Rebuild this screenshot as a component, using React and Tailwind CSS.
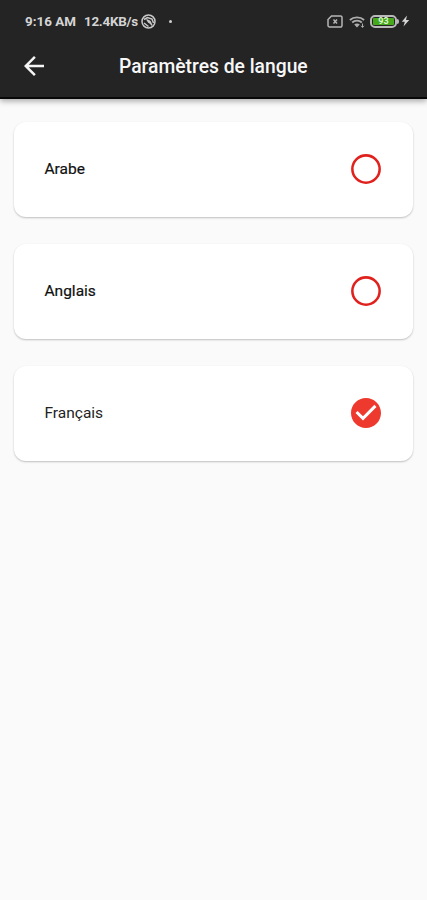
import { useState } from "react";

const LANGUAGES = [
  { code: "ar", label: "Arabe" },
  { code: "en", label: "Anglais" },
  { code: "fr", label: "Français" },
];

function StatusBar() {
  return (
    <div className="flex h-[42px] items-center pl-[25px] pr-[17px] text-[13.4px] font-bold leading-none text-[#d4d4d4]">
      <span className="w-[59px] whitespace-nowrap pt-[2px]">9:16 AM</span>
      <span className="w-[57px] whitespace-nowrap pt-[2px] tracking-[-0.25px]">12.4KB/s</span>
      <svg className="size-[15px]" viewBox="0 0 15 15" fill="none" stroke="#c9c9c9">
        <circle cx="7.5" cy="7.5" r="6.5" strokeWidth="1.5" />
        <path d="M3 5.5 6.5 3.5l4.5 1.5 1.5 4M6 6l3 1.5 2 4M3 9l4.5 3.5" strokeWidth="1.5" />
        <path d="m5 5 4 2 1.5 4L7 8.500Z" fill="#c9c9c9" stroke="none" />
      </svg>
      <span className="ml-[13px] size-[3px] rounded-full bg-[#d0d0d0]" />

      <div className="ml-auto flex items-center">
        <svg className="h-[13px] w-[16px]" viewBox="0 0 16 13" fill="none" stroke="#b5b5b5">
          <path d="M4.5 1h9A1.4 1.4 0 0 1 15 2.400v8.200a1.400 1.400 0 0 1-1.500 1.400H2.400A1.400 1.400 0 0 1 1 10.600V4.500Z" strokeWidth="1.5" />
          <path d="m6.5 4.5 3.5 4M10 4.5l-3.5 4" strokeWidth="1.5" />
        </svg>
        <svg className="ml-[6px] h-[13px] w-[16px]" viewBox="0 0 16 13" fill="none" stroke="#adadad">
          <path d="M.9 5C4.700 1.400 11.300 1.400 15.100 5" strokeWidth="1.8" />
          <path d="M3.200 7.500c2.600-2.400 7-2.400 9.600 0" strokeWidth="1.8" />
          <path d="M5.200 9.500c1.600-1.300 4-1.300 5.600 0L8 12.500Z" fill="#adadad" stroke="none" />
          <path d="M13.500 8.500v4M12 10.800l1.500 1.500 1.500-1.500" strokeWidth="1" />
        </svg>
        <div className="ml-[5px] flex h-[13px] w-[27px] items-center justify-center rounded-[5px] border-2 border-[#b9b9b9] p-px">
          <div className="flex h-full w-full items-center justify-center rounded-[1px] bg-[#46a81d] text-[9px] font-bold text-[#dcf7cd]">
            93
          </div>
        </div>
        <span className="h-[5px] w-[2px] rounded-r-sm bg-[#b9b9b9]" />
        <svg className="ml-[2px] h-3 w-[9px]" viewBox="0 0 8 12" fill="#d6d6d6">
          <path d="M5.500.5.300 6.800h3L2 11.500l5.700-6.400H4.500Z" />
        </svg>
      </div>
    </div>
  );
}

function LanguageCard({ label, selected, onSelect }) {
  return (
    <button
      type="button"
      role="radio"
      aria-checked={selected}
      onClick={onSelect}
      className="flex h-[95px] w-full items-center justify-between rounded-[12px] bg-white pb-px pl-[30.5px] pr-[29px] shadow-[0_1px_2px_rgba(0,0,0,0.24)]"
    >
      <span
        className={`pt-px text-[15.5px] ${
          selected ? "text-[#222222]" : "text-[#111111] [-webkit-text-stroke:0.2px_#111111]"
        }`}
      >
        {label}
      </span>
      {selected ? (
        <svg className="size-[36px]" viewBox="0 0 24 24" fill="#ee3a2e">
          <path d="M12 2C6.480 2 2 6.480 2 12s4.480 10 10 10 10-4.480 10-10S17.520 2 12 2zm-2 15-5-5 1.410-1.410L10 14.170l7.590-7.590L19 8l-9 9z" />
        </svg>
      ) : (
        <svg className="size-[36px]" viewBox="0 0 24 24" fill="none" stroke="#e0221e">
          <circle cx="12" cy="12" r="9.1" strokeWidth="1.7" />
        </svg>
      )}
    </button>
  );
}

export default function App() {
  const [language, setLanguage] = useState("fr");

  return (
    <div className="min-h-screen bg-[#fafafa] font-['Roboto',sans-serif]">
      <header className="h-[99px] border-b-2 border-[#080808] bg-[#242424] shadow-[0_2px_6px_rgba(0,0,0,0.35)]">
        <StatusBar />
        <div className="flex h-12 items-center pl-[19px]">
          <button type="button" aria-label="Retour" className="size-[30px]">
            <svg className="size-[30px]" viewBox="0 0 24 24" fill="#f5f5f5">
              <path d="M20 11H7.830l5.590-5.590L12 4l-8 8 8 8 1.410-1.410L7.830 13H20v-2z" />
            </svg>
          </button>
          <h1 className="ml-[70px] whitespace-nowrap pt-[2px] text-[19.3px] font-medium text-[#f7f7f7]">
            Paramètres de langue
          </h1>
        </div>
      </header>

      <main role="radiogroup" className="flex flex-col gap-[27px] px-[14px] pt-[23px]">
        {LANGUAGES.map(({ code, label }) => (
          <LanguageCard
            key={code}
            label={label}
            selected={language === code}
            onSelect={() => setLanguage(code)}
          />
        ))}
      </main>
    </div>
  );
}
